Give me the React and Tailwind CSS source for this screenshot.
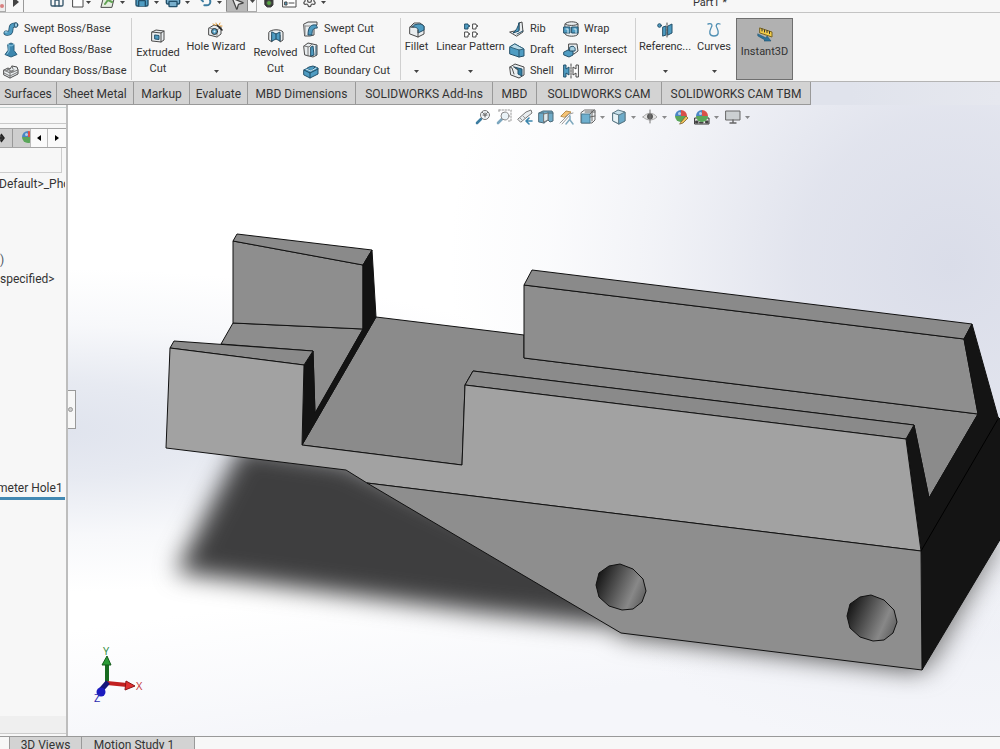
import { House, Save, Printer, Undo2, MousePointer2, Settings } from 'lucide-react';

const S = { stroke: '#4a4a4a', strokeWidth: 1, strokeLinejoin: 'round', strokeLinecap: 'round' };

function Svg({ children, className = 'size-4' }) {
  return (
    <svg viewBox="0 0 16 16" className={`${className} shrink-0`} fill="none" aria-hidden="true" {...S}>
      {children}
    </svg>
  );
}

const BLUE = '#4f9cc2';
const PALE = '#e9edef';

const icons = {
  sweptBoss: (
    <Svg>
      <path d="M3 12c4 1 5-1 5-4s1-4 4-4" stroke="#23506a" strokeWidth="5" />
      <path d="M3 12c4 1 5-1 5-4s1-4 4-4" stroke={BLUE} strokeWidth="3.4" />
      <ellipse cx="13" cy="4" rx="1.8" ry="2.3" fill="#9ccbe2" stroke="#23506a" />
      <path d="M2 11h2" stroke="#b7dcec" />
    </Svg>
  ),
  loftedBoss: (
    <Svg>
      <path d="M5 2.5 8 1l3 1.5v6l3 4L8 15l-6-2.500 3-4z" fill="#3d87ae" stroke="#2b5f7c" />
      <path d="M5 2.500 8 4l3-1.500M6 4v5l-2 3" stroke="#8cc6e0" />
    </Svg>
  ),
  boundaryBoss: (
    <Svg>
      <path d="m1 7 4-2 2 1 2-3 5 1 1 3v4l-8 4-6-3z" fill={PALE} />
      <path d="m1 7 6 3 8-3M7 10v5M3 8l4-2M6 9l5-2M9 3l1 3M4 6l6 3M1 10l6 3 8-4" stroke="#777" />
    </Svg>
  ),
  extrudedCut: (
    <Svg>
      <path d="m2 4 4-2 8 1v9l-3 2-9-1z" fill={PALE} />
      <path d="m2 4 9 1 3-2M11 5v9" />
      <path d="m5 7 4 .500v4L5 11z" fill={BLUE} stroke="#23506a" />
    </Svg>
  ),
  holeWizard: (
    <Svg>
      <path d="m1 6 5-3 7 2v7l-4 3-8-2z" fill={PALE} />
      <path d="m1 6 8 2 4-3M9 8v7" stroke="#888" />
      <circle cx="6.500" cy="9.500" r="3" fill={BLUE} stroke="#333" />
      <circle cx="6.500" cy="9.500" r="1" fill="#dceef6" stroke="none" />
      <path d="m9 3 5 5" stroke="#222" strokeWidth="1.600" />
      <path d="m8 1 .5 2M12 1l-1 2M5 2l2 1M14 4l-2 0" stroke="#e7a13d" />
    </Svg>
  ),
  revolvedCut: (
    <Svg>
      <path d="M1 4c2-3 12-3 14 0v8l-3 2V7L8 9 4 7v7l-3-2z" fill={PALE} />
      <path d="m4 4 4 2 4-2v9l-4-2-4 2z" fill={BLUE} stroke="#23506a" />
      <path d="M8 6v5" stroke="#1d475e" />
    </Svg>
  ),
  sweptCut: (
    <Svg>
      <path d="m1 3 4-2h9v3l-3 1v9l-4 1H2z" fill={PALE} />
      <path d="M13 4C8 3 5 6 5 14h4c0-5 1-7 5-7z" fill={BLUE} stroke="#23506a" />
      <path d="M2 5h5M2 5v9" stroke="#888" />
    </Svg>
  ),
  loftedCut: (
    <Svg>
      <path d="m1 4 4-3 9 2v10l-4 2-8-2z" fill={PALE} />
      <path d="M5 5v9M1 4l5 1 3-3" stroke="#777" />
      <path d="m8 5 2-1 1 9-3 1z" fill={BLUE} stroke="#23506a" />
      <path d="M13 4v9" stroke="#23506a" />
    </Svg>
  ),
  boundaryCut: (
    <Svg>
      <path d="m1 7 5-3 4-1 5 2v6l-8 4-6-3z" fill={BLUE} stroke="#23506a" />
      <path d="m1 7 6 3 8-4M7 10v5M4 6l5 2 3-4" stroke="#1f4c64" />
      <path d="m3 6 5 2 5-3" stroke="#cfe8f3" />
    </Svg>
  ),
  fillet: (
    <Svg>
      <path d="M1 5 5 1h6l4 3v8l-6 3-8-3z" fill={PALE} />
      <path d="m5 3 4-1c3 0 6 1 6 3v3L9 11V8C9 6 7 5 3 5z" fill={BLUE} stroke="#23506a" />
      <path d="M9 8v7M1 5h4" />
    </Svg>
  ),
  linearPattern: (
    <Svg>
      <path d="M2 2h3v1l2 1-2 1v2H2z" fill={BLUE} stroke="#23506a" />
      <path d="M10 2h3v1l2 1-2 1v2h-3zM2 10h3v1l2 1-2 1v2H2zM10 10h3v1l2 1-2 1v2h-3z" fill="#fff" />
    </Svg>
  ),
  rib: (
    <Svg>
      <path d="m1 11 9-2V2l3-1 1 10-6 4z" fill={PALE} />
      <path d="M10 2v8l-6 2c3-2 5-6 6-10z" fill={BLUE} stroke="#23506a" />
      <path d="m8 13 6-3" stroke="#23506a" />
    </Svg>
  ),
  draft: (
    <Svg>
      <path d="m1 5 5-3 9 5v7l-5 1-9-3z" fill={BLUE} stroke="#23506a" />
      <path d="m1 5 9 3 5-1-9-5z" fill="#b9dbe9" stroke="#35677f" />
      <path d="M10 8v7" stroke="#23506a" />
    </Svg>
  ),
  shell: (
    <Svg>
      <path d="m1 4 5-3 9 3v8l-5 3-8-3z" fill={PALE} />
      <path d="m5 4 8 2v7l-4-2V7z" fill="#2f7fa5" stroke="#23506a" />
      <path d="m1 4 2 1 2 6M5 4l4 3" stroke="#555" />
    </Svg>
  ),
  wrap: (
    <Svg>
      <path d="M2 3c1-3 12-3 13 0v10c-1 3-12 3-13 0z" fill={PALE} />
      <path d="M2 3c1 2 12 2 13 0" />
      <path d="M1 6h6v6H1zM9 6h6v6H9z" fill={BLUE} stroke="#23506a" />
      <path d="M3 8h2v4M11 8h2v4" stroke="#d6ebf4" />
    </Svg>
  ),
  intersect: (
    <Svg>
      <path d="M6 2h8l1 7-4 3-5-1z" fill={PALE} />
      <path d="m1 10 4-2 5 1v4l-4 2-5-2z" fill={BLUE} stroke="#23506a" />
      <path d="M7 5c3-2 6 0 5 4H7z" fill="#a9d0e1" stroke="#23506a" />
    </Svg>
  ),
  mirror: (
    <Svg>
      <path d="M1 2h2v4l3-2v8l-3-2v4H1z" fill={BLUE} stroke="#23506a" />
      <path d="M8 1v14" strokeDasharray="2 1" />
      <path d="M15 2h-2v4l-3-2v8l3-2v4h2z" fill="#fff" />
    </Svg>
  ),
  reference: (
    <Svg>
      <circle cx="2.500" cy="3.500" r="1.800" fill={BLUE} stroke="#23506a" />
      <path d="m6 5 3-1v9l-3 1zM11 4l4-2v9l-4 2z" fill={BLUE} stroke="#23506a" />
      <path d="M10 1v14" strokeDasharray="2 1" />
    </Svg>
  ),
  curves: (
    <Svg>
      <path d="M2 2c4-1 5 1 3 4-2 4-2 8 3 8s5-4 3-8c-2-3 0-5 3-4" stroke="#4f8fb3" strokeWidth="1.300" />
    </Svg>
  ),
  instant3d: (
    <Svg>
      <path d="m3 1 12 4v5L3 6z" fill="#f2cd4a" stroke="#7a6420" />
      <path d="M5 2v2M7.500 3v2M10 3.500v2M12.500 4.500v2" stroke="#333" />
      <path d="m1 7 8 4 1-2 4 5-7 0 1-1-7-4z" fill="#2d739b" stroke="#1f5371" strokeWidth=".6" />
    </Svg>
  ),
  zoomFit: (
    <Svg>
      <path d="m2 14 4-4" stroke="#3c7ca0" strokeWidth="2.600" />
      <circle cx="10" cy="6" r="4.500" fill="#f3f7f9" stroke="#777" />
      <path d="M8 6h4M10 4v4M7.500 3.500l1 1M12.500 3.500l-1 1" stroke="#555" />
    </Svg>
  ),
  zoomArea: (
    <Svg>
      <path d="M3 1h12v11h-3M3 1v3" stroke="#999" strokeDasharray="1.500 1.500" />
      <path d="m2 14 4-4" stroke="#7ba6be" strokeWidth="2.600" />
      <circle cx="9" cy="7" r="4" fill="#eaf3f7" stroke="#888" />
    </Svg>
  ),
  previousView: (
    <Svg>
      <path d="m1 10 8-7 5-2 1 3-5 4-6 5z" fill={PALE} stroke="#777" />
      <path d="M3 9l2 2M6 7l2 2" stroke="#999" />
      <path d="M15 12H9m3-3-3 3 3 3" stroke="#3c86ad" strokeWidth="1.600" />
    </Svg>
  ),
  section: (
    <Svg>
      <path d="m1 4 4-2h9l1 2v8l-3 1-2-2-4 3-5-1z" fill="#6fabc8" stroke="#4d6b7a" />
      <path d="M1 4h5v10M10 4h5M10 4v7" stroke="#4d6b7a" />
      <path d="m6 5 4-1v7l-4 2z" fill="#dfe9ed" stroke="#777" />
    </Svg>
  ),
  annotations: (
    <Svg>
      <path d="m2 7 5-5 5 1-6 5z" fill="#f5c377" stroke="#b98f4d" />
      <path d="m1 14 9-9 4-1M3 15l8-9" stroke="#999" />
      <path d="M11 7v4l3 4M11 10l-4 5" stroke="#7fa9be" strokeWidth="1.500" />
    </Svg>
  ),
  orientation: (
    <Svg>
      <path d="M5 1h10v10l-3 3H1V4z" fill="#f2f4f5" stroke="#666" />
      <path d="M2 5h8v9H2z" fill="#6fb0cf" stroke="#4c7c93" />
      <path d="m10 5 4-4M12 2v10M5 3h10M10 8l5-1" stroke="#666" />
    </Svg>
  ),
  display: (
    <Svg>
      <path d="m2 4 5-3 7 2v9l-6 3-6-3z" fill="#c6e0eb" stroke="#5b7986" />
      <path d="m2 4 6 2v9l-6-3z" fill="#e8f3f7" stroke="#5b7986" />
      <path d="m8 6 6-3v9l-6 3z" fill="#6cabc9" stroke="#5b7986" />
    </Svg>
  ),
  eye: (
    <Svg>
      <path d="M1 8c4-5 10-5 14 0-4 4-10 4-14 0z" fill="#e4e4e4" stroke="#aaa" />
      <circle cx="8" cy="7.500" r="3" fill="#5a5a5a" stroke="none" />
      <path d="M8 1v13" stroke="#777" />
    </Svg>
  ),
  monitor: (
    <Svg>
      <path d="M1 2h14v9H1z" fill="#ccd0d2" stroke="#666" />
      <path d="M8 11v3M5 14h6" stroke="#666" strokeWidth="1.400" />
    </Svg>
  ),
  appearance: (
    <Svg>
      <Ball />
      <path d="m8 13 5-6 2 2-5 5-3 1z" fill="#f1c45b" stroke="#7b6030" strokeWidth=".8" />
    </Svg>
  ),
  scene: (
    <Svg>
      <path d="M1 9h14v6H1z" fill="#e6e6e6" stroke="#333" />
      <path d="M2 12h2v2H2zM6 13h3v1H6zM12 12h2v2h-2z" fill="#333" />
      <Ball />
    </Svg>
  ),
};

function Ball() {
  return (
    <g stroke="none">
      <path d="M8 7V1a6 6 0 0 0-6 6z" fill="#4a86c5" />
      <path d="M8 7V1a6 6 0 0 1 6 6z" fill="#d9504a" />
      <path d="M8 7H2a6 6 0 0 0 6 6z" fill="#5aa65a" />
      <path d="M8 7h6a6 6 0 0 1-6 6z" fill="#5aa65a" />
      <circle cx="6.500" cy="4.500" r="1.500" fill="#fff" opacity=".6" />
    </g>
  );
}

function Caret() {
  return (
    <svg viewBox="0 0 5 3" className="w-[5px] h-[3px] shrink-0" aria-hidden="true">
      <path d="M0 0h5L2.500 3z" fill="#444" />
    </svg>
  );
}

function SmallTools({ items, className }) {
  return (
    <div className={`flex flex-col pt-[2px] shrink-0 ${className}`}>
      {items.map(([icon, label]) => (
        <button key={label} className="flex items-center gap-[5px] h-[21px] text-[11px] leading-4 whitespace-nowrap">
          {icons[icon]}
          {label}
        </button>
      ))}
    </div>
  );
}

function BigTool({ icon, label, menu, className }) {
  return (
    <button
      className={`flex flex-col items-center shrink-0 text-[11px] leading-4 ${menu ? 'pt-[5px]' : 'pt-[11px]'} ${className}`}
    >
      {icons[icon]}
      <span className="mt-px whitespace-pre text-center">{label}</span>
      {menu && (
        <span className="mt-[15px]">
          <Caret />
        </span>
      )}
    </button>
  );
}

function Separator() {
  return <div className="w-px h-[62px] mt-px bg-[#d0d0d0] shrink-0" />;
}

const tabs = [
  ['Surfaces', 'w-[57px]'],
  ['Sheet Metal', 'w-[77px]'],
  ['Markup', 'w-[56px]'],
  ['Evaluate', 'w-[58px]'],
  ['MBD Dimensions', 'w-[108px]'],
  ['SOLIDWORKS Add-Ins', 'w-[137px]'],
  ['MBD', 'w-[44px]'],
  ['SOLIDWORKS CAM', 'w-[125px]'],
  ['SOLIDWORKS CAM TBM', 'w-[149px]'],
];

function QuickAccess() {
  return (
    <header className="flex items-end h-[13px] overflow-hidden border-b border-[#c4c4c4] shrink-0">
      <div className="flex items-end w-6 h-[12px] border-r border-[#999]">
        <span className="w-[6px] h-[12px] bg-[#eee] border-r border-b border-[#aaa]">
          <span className="block size-1 mt-1 bg-[#d98080] rounded-full" />
        </span>
        <button aria-label="Expand menu" className="ml-[7px] mb-[5px]">
          <svg viewBox="0 0 6 10" className="w-[6px] h-[10px]"><path d="M0 0v10l6-5z" fill="#444" /></svg>
        </button>
      </div>
      <div className="flex items-end ml-[25px] pb-1 shrink-0">
        <button aria-label="Home" className="w-[21px]"><House size={16} strokeWidth={2} color="#35556a" /></button>
        <button aria-label="New" className="flex items-end w-[30px]">
          <Svg><path d="M3 1h10v14H3z" fill="#fff" /></Svg>
          <span className="pb-1"><Caret /></span>
        </button>
        <button aria-label="Open" className="flex items-end gap-1 w-[34px]">
          <Svg><path d="M1 15 4 3h11l-3 12z" fill="#e5eee0" /><path d="m5 12 3-4 4 2" stroke="#62a354" strokeWidth="2" /></Svg>
          <span className="pb-1"><Caret /></span>
        </button>
        <button aria-label="Save" className="flex items-end gap-1 w-[31px]"><Save size={16} fill="#4f9cc2" color="#23506a" strokeWidth={2} /><span className="pb-1"><Caret /></span></button>
        <button aria-label="Print" className="flex items-end gap-1 w-[32px]"><Printer size={16} fill="#78aecb" color="#23506a" strokeWidth={2} /><span className="pb-1"><Caret /></span></button>
        <button aria-label="Undo" className="flex items-end gap-1 w-[29px]"><Undo2 size={16} color="#3c7ca0" strokeWidth={3} /><span className="pb-1"><Caret /></span></button>
      </div>
      <div className="flex h-[12px] border-b border-[#aaa] shrink-0">
        <button aria-label="Select" className="flex items-end justify-center w-[22px] bg-[#b9b9b9] border-x border-[#888]">
          <MousePointer2 size={15} color="#444" fill="#eee" strokeWidth={2} />
        </button>
        <button aria-label="Select options" className="flex items-center justify-center w-[9px] border-r border-[#aaa] pb-2">
          <Caret />
        </button>
      </div>
      <div className="flex items-end ml-1 pb-1 shrink-0">
        <button aria-label="Rebuild" className="w-5">
          <Svg><path d="M4 0h8v13l-2 2H6l-2-2z" fill="#333" /><circle cx="8" cy="11" r="2.500" fill="#58a644" /></Svg>
        </button>
        <button aria-label="Properties" className="w-[21px]">
          <Svg><path d="M2 0h13v15H2z" fill="#fff" /><path d="M4 4h2v3H4zM4 10h2v3H4z" fill={BLUE} /><path d="M8 5h5M8 11h5" /></Svg>
        </button>
        <button aria-label="Options" className="flex items-end gap-1"><Settings size={15} color="#555" strokeWidth={2} /><span className="pb-1"><Caret /></span></button>
      </div>
      <span className="ml-auto mr-[273px] mb-px text-[11px] leading-4 whitespace-nowrap">Part1 *</span>
    </header>
  );
}

function Ribbon() {
  return (
    <section className="flex h-[69px] pt-1 border-b border-[#b4b4b4] shrink-0">
      <SmallTools
        className="w-[131px] pl-[3px]"
        items={[['sweptBoss', 'Swept Boss/Base'], ['loftedBoss', 'Lofted Boss/Base'], ['boundaryBoss', 'Boundary Boss/Base']]}
      />
      <Separator />
      <BigTool icon="extrudedCut" label={'Extruded\nCut'} className="w-[52px]" />
      <BigTool icon="holeWizard" label="Hole Wizard" menu className="w-[64px]" />
      <BigTool icon="revolvedCut" label={'Revolved\nCut'} className="w-[55px]" />
      <SmallTools
        className="w-[97px]"
        items={[['sweptCut', 'Swept Cut'], ['loftedCut', 'Lofted Cut'], ['boundaryCut', 'Boundary Cut']]}
      />
      <Separator />
      <BigTool icon="fillet" label="Fillet" menu className="w-[31px]" />
      <BigTool icon="linearPattern" label="Linear Pattern" menu className="w-[77px]" />
      <SmallTools className="w-[54px]" items={[['rib', 'Rib'], ['draft', 'Draft'], ['shell', 'Shell']]} />
      <SmallTools className="w-[72px]" items={[['wrap', 'Wrap'], ['intersect', 'Intersect'], ['mirror', 'Mirror']]} />
      <Separator />
      <BigTool icon="reference" label="Referenc..." menu className="w-[58px]" />
      <BigTool icon="curves" label="Curves" menu className="w-[40px]" />
      <div className="ml-[2px] mt-px h-[62px] w-[57px] bg-[#b1b1b1] border border-[#6f6f6f] flex justify-center shrink-0">
        <BigTool icon="instant3d" label="Instant3D" className="w-[55px] -mt-[3px]" />
      </div>
    </section>
  );
}

function FeaturePanel() {
  return (
    <aside className="flex flex-col w-[68px] shrink-0 border-r-2 border-[#bdbdbd] text-[12px] leading-4 whitespace-nowrap">
      <div className="h-[3px] border-b border-[#c9d3d3]" />
      <div className="h-4 border-b border-[#c9c9c9]" />
      <div className="flex h-5 mt-1 border-y border-[#a5a5a5] bg-[#cecece]">
        <button aria-label="Dimension tab" className="w-[13px] border-r border-[#999] overflow-hidden">
          <svg viewBox="0 0 13 16" className="w-[13px] h-4"><path d="M0 8h4M1 5v6M1 4l3 4-3 4" stroke="#222" fill="none" strokeWidth="1.500" /></svg>
        </button>
        <button aria-label="Display tab" className="w-[17px] pl-[7px] overflow-hidden"><Svg><Ball /></Svg></button>
        <button aria-label="Previous tab" className="flex items-center justify-center w-[18px] bg-[#fafafa] border-x border-[#bbb]">
          <svg viewBox="0 0 4 6" className="w-1 h-[6px]"><path d="M4 0v6L0 3z" /></svg>
        </button>
        <button aria-label="Next tab" className="flex items-center justify-center flex-1 bg-[#fafafa]">
          <svg viewBox="0 0 4 6" className="w-1 h-[6px]"><path d="M0 0v6l4-3z" /></svg>
        </button>
      </div>
      <div className="h-[25px] mr-1 border-r border-b border-[#ccc]" />
      <div className="w-[65px] overflow-hidden mt-[3px] -indent-px">Default&gt;_Pho</div>
      <div className="mt-[60px] text-gray-600">)</div>
      <div className="mt-[3px]">specified&gt;</div>
      <div className="mt-[193px] w-[65px] -indent-[3px] overflow-hidden border-b-[3px] border-[#4389b3] h-5">meter Hole1</div>
      <div className="mt-auto h-[18px] mb-[2px] bg-[#efefef] border-b border-[#ccc]" />
    </aside>
  );
}

const HOLE = '596,585 599,573 609,566 620,564 633,569 643,579 646,591 642,602 633,609 622,610 609,606 599,597';

function Model() {
  return (
    <svg
      viewBox="68 105 932 631"
      preserveAspectRatio="xMinYMin slice"
      className="absolute inset-0 w-full h-full"
      role="img"
      aria-label="Part model"
    >
      <defs>
        <radialGradient id="skyRight" gradientUnits="userSpaceOnUse" cx="950" cy="265" r="500">
          <stop offset="0" stopColor="#dadde9" />
          <stop offset=".3" stopColor="#dadde9" stopOpacity=".8" />
          <stop offset=".6" stopColor="#dadde9" stopOpacity=".35" />
          <stop offset=".8" stopColor="#dadde9" stopOpacity=".12" />
          <stop offset="1" stopColor="#dadde9" stopOpacity="0" />
        </radialGradient>
        <radialGradient id="skyLeft" gradientUnits="userSpaceOnUse" cx="40" cy="430" r="600" gradientTransform="translate(0 314) scale(1 .27)">
          <stop offset="0" stopColor="#dfe3ed" />
          <stop offset=".3" stopColor="#dfe3ed" stopOpacity=".75" />
          <stop offset=".65" stopColor="#dfe3ed" stopOpacity=".25" />
          <stop offset="1" stopColor="#dfe3ed" stopOpacity="0" />
        </radialGradient>
        <linearGradient id="floor" x1="0" y1="0" x2=".2" y2="1">
          <stop offset=".8" stopColor="#fff" />
          <stop offset="1" stopColor="#f5f6fa" />
        </linearGradient>
        <linearGradient id="bore" x1="0" y1=".3" x2="1" y2=".7">
          <stop offset="0" stopColor="#141414" />
          <stop offset=".5" stopColor="#626262" />
          <stop offset=".75" stopColor="#888" />
          <stop offset="1" stopColor="#606060" />
        </linearGradient>
        <filter id="soft" x="-20%" y="-20%" width="140%" height="140%" colorInterpolationFilters="sRGB">
          <feGaussianBlur stdDeviation="12" />
        </filter>
      </defs>
      <rect x="68" y="105" width="932" height="631" fill="url(#floor)" />
      <rect x="68" y="105" width="932" height="631" fill="url(#skyRight)" />
      <rect x="68" y="105" width="932" height="631" fill="url(#skyLeft)" />

      {/* ground shadow */}
      <g filter="url(#soft)">
        <path d="M242 445 346 460 640 600 640 629 480 612 176 572z" fill="#3e3e3f" />
        <path d="M600 600 922 640 922 672 620 636z" fill="#555" />
        <path d="M915 600 990 530 1000 540 928 672z" fill="#777" />
      </g>

      <g stroke="#111" strokeLinejoin="round">
        <path d="m376 317 148 18v23l454 56-49 84-15-73-441-54-8 14-3 80-160-20z" fill="#8b8b8b" />
        <path d="m233 323 130 6-48 85-2-63-92-7z" fill="#8d8d8d" />
        <path d="m233 241 130 24v64l-130-6z" fill="#8e8e8e" />
        <path d="m237 234 135 16-9 15-130-24z" fill="#8a8a8a" />
        <path d="m363 265 9-15 4 67-74 128 2-80 9-14 2 62 48-84z" fill="#131313" />
        <path d="m174 341 139 10-9 14-134-17z" fill="#8a8a8a" />
        <path d="m524 285 440 54 14 75-454-56z" fill="#8e8e8e" />
        <path d="m532 270 440 54-8 15-440-54z" fill="#8a8a8a" />
        <path d="m972 324 26 93 3 3v118l-79 132-1-119-15-112 8-14 15 73 49-84-14-75z" fill="#141414" />
        <path d="m998 419-77 132" stroke="#000" />
        <path d="m473 371 441 54-8 14-441-54z" fill="#8a8a8a" />
        <path d="m170 348 134 17-2 80 160 20 3-80 441 54 15 112-554-68-21-13-180-22z" fill="#a2a2a2" />
        <path d="m367 483 554 68 1 119-301-37z" fill="#8e8e8e" />
        <polygon points={HOLE} fill="url(#bore)" />
        <polygon points={HOLE} fill="url(#bore)" transform="translate(251 31)" />
      </g>

      {/* origin triad */}
      <g fontFamily="Open Sans, sans-serif" fontSize="11">
        <path d="M107 683V662" stroke="#176b20" strokeWidth="4" />
        <path d="m107 656-5 9h9z" fill="#2a9c36" stroke="#145c1b" />
        <path d="m107 683 20 2" stroke="#c22020" strokeWidth="4" />
        <path d="m135 686-9-5-1 9z" fill="#e03030" stroke="#8a1515" />
        <path d="m108 682-7 8" stroke="#15157a" strokeWidth="5" />
        <circle cx="101" cy="692" r="4.500" fill="#1c1cc0" />
        <text x="103" y="655" fill="#2e8b3a">Y</text>
        <text x="136" y="690" fill="#c83a3a">X</text>
        <text x="94" y="702" fill="#2c2cb0">Z</text>
      </g>
    </svg>
  );
}

const viewTools = [
  ['zoomFit', 'Zoom to fit'],
  ['zoomArea', 'Zoom to area'],
  ['previousView', 'Previous view'],
  ['section', 'Section view'],
  ['annotations', 'Dynamic annotation views'],
  ['orientation', 'View orientation', true],
  ['display', 'Display style', true],
  ['eye', 'Hide/show items', true],
  ['appearance', 'Edit appearance'],
  ['scene', 'Apply scene', true],
  ['monitor', 'View settings', true],
];

function ViewToolbar() {
  return (
    <div className="relative flex items-center h-6 pl-[405px]">
      {viewTools.map(([icon, label, menu]) => (
        <button
          key={icon}
          aria-label={label}
          className={`flex items-center shrink-0 pl-[2px] gap-1 ${menu ? 'w-[31px]' : 'w-[21px]'}`}
        >
          {icons[icon]}
          {menu && <span className="opacity-60"><Caret /></span>}
        </button>
      ))}
    </div>
  );
}

export default function App() {
  return (
    <div className="flex flex-col h-screen overflow-hidden bg-[#f7f7f7] text-[#333] font-[Roboto,sans-serif]">
      <QuickAccess />
      <Ribbon />
      <div className="relative flex flex-col flex-1 min-h-0">
        <nav className="flex h-[23px] shrink-0 bg-[linear-gradient(90deg,#e0e3ec,#e0e3ec_85%,#e6e8ef)]">
          {tabs.map(([label, width]) => (
            <button
              key={label}
              className={`${width} shrink-0 bg-[#d3d3d3] border-r border-b border-[#999] pt-px text-[12px] leading-4 whitespace-nowrap`}
            >
              {label}
            </button>
          ))}
        </nav>
        <div className="flex flex-1 min-h-0">
          <FeaturePanel />
          <main className="relative flex-1 min-w-0 overflow-hidden bg-white">
            <Model />
            <ViewToolbar />
            <button
              aria-label="Collapse panel"
              className="absolute left-0 top-[285px] flex items-center w-2 h-[39px] bg-[#f7f7f7] border border-l-0 border-[#999]"
            >
              <span className="size-[5px] rounded-full bg-[#ccc] border border-[#999]" />
            </button>
          </main>
        </div>
      </div>
      <footer className="flex h-[13px] pl-[9px] overflow-hidden border-t border-[#999] text-[12px] leading-4 shrink-0">
        <button className="w-[73px] h-4 bg-[#d3d3d3] border-x border-[#999]">3D Views</button>
        <button className="w-[113px] h-4 bg-[#d3d3d3] border-r border-[#999] pr-2">Motion Study 1</button>
      </footer>
    </div>
  );
}
